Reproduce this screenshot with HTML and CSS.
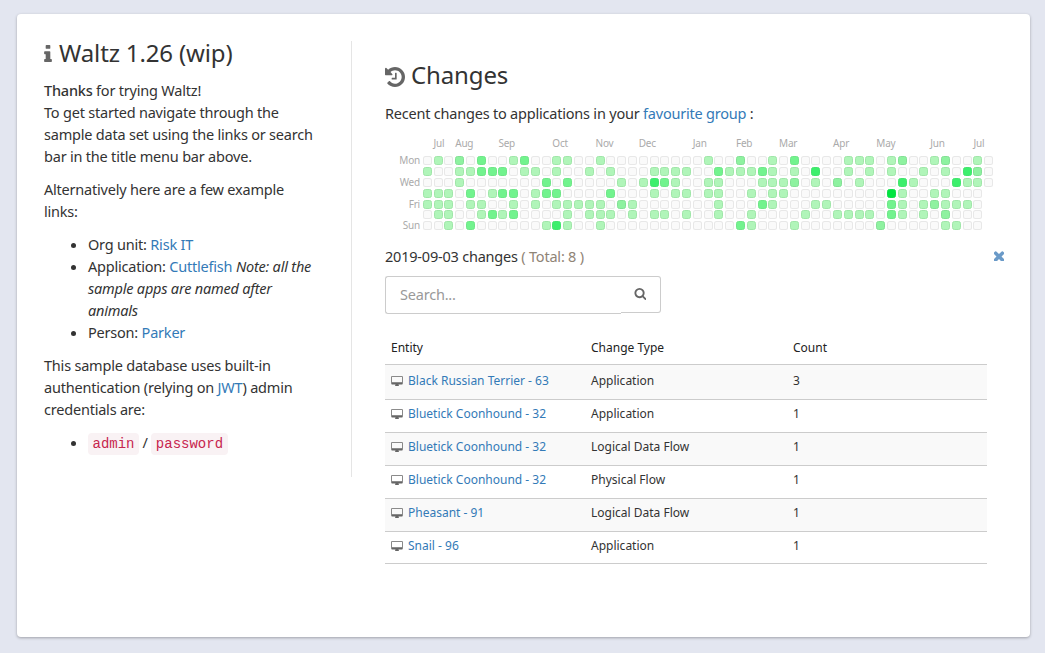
FILE: index.html
```html
<!DOCTYPE html>
<html lang="en">
<head>
    <meta charset="UTF-8">
    <meta name="viewport" content="width=device-width, initial-scale=1.0">
    <title>Waltz</title>
    <link rel="stylesheet" href="styles.css">
</head>
<body>
    <div class="card">
        <div class="intro">
            <h2 class="intro-title">
                <svg class="icon icon-info" viewBox="576 128 640 1408"><path d="M1216 1344v128q0 26-19 45t-45 19h-512q-26 0-45-19t-19-45v-128q0-26 19-45t45-19h64v-384h-64q-26 0-45-19t-19-45v-128q0-26 19-45t45-19h384q26 0 45 19t19 45v576h64q26 0 45 19t19 45zm-128-1152v192q0 26-19 45t-45 19h-256q-26 0-45-19t-19-45v-192q0-26 19-45t45-19h256q26 0 45 19t19 45z"/></svg>
                Waltz 1.26 (wip)
            </h2>
            <p><strong>Thanks</strong> for trying Waltz!<br>
                To get started navigate through the sample data set using the links or search bar in the title menu bar above.</p>
            <p>Alternatively here are a few example links:</p>
            <ul>
                <li>Org unit: <a href="#">Risk IT</a></li>
                <li>Application: <a href="#">Cuttlefish</a> <em>Note: all the sample apps are named after animals</em></li>
                <li>Person: <a href="#">Parker</a></li>
            </ul>
            <p>This sample database uses built-in authentication (relying on <a href="#">JWT</a>) admin credentials are:</p>
            <ul>
                <li><code>admin</code> / <code>password</code></li>
            </ul>
        </div>

        <div class="changes">
            <h2 class="changes-title">
                <svg class="icon icon-history" viewBox="128 128 1536 1536"><path d="M1664 896q0 156-61 298t-164 245-245 164-298 61q-172 0-327-72.5t-264-204.5q-7-10-6.5-22.5t8.5-20.5l137-138q10-9 25-9 16 2 23 12 73 95 179 147t225 52q104 0 198.5-40.5t163.5-109.5 109.5-163.5 40.5-198.5-40.5-198.5-109.5-163.5-163.5-109.5-198.5-40.5q-98 0-188 35.5t-160 101.5l137 138q31 30 14 69-17 40-59 40h-448q-26 0-45-19t-19-45v-448q0-42 40-59 39-17 69 14l130 129q107-101 244.5-156.5t284.5-55.5q156 0 298 61t245 164 164 245 61 298zm-640-288v448q0 14-9 23t-23 9h-320q-14 0-23-9t-9-23v-64q0-14 9-23t23-9h224v-352q0-14 9-23t23-9h64q14 0 23 9t9 23z"/></svg>
                Changes
            </h2>
            <p class="changes-lead">Recent changes to applications in your <a href="#">favourite group</a> :</p>

            <div class="calendar" id="calendar"></div>

            <div class="day-header">
                <span>2019-09-03 changes <span class="total">( Total: 8 )</span></span>
                <svg class="icon icon-close" viewBox="352 352 1088 1088"><path d="M1490 1322q0 40-28 68l-136 136q-28 28-68 28t-68-28l-294-294-294 294q-28 28-68 28t-68-28l-136-136q-28-28-28-68t28-68l294-294-294-294q-28-28-28-68t28-68l136-136q28-28 68-28t68 28l294 294 294-294q28-28 68-28t68 28l136 136q28 28 28 68t-28 68l-294 294 294 294q28 28 28 68z"/></svg>
            </div>

            <div class="search">
                <input class="search-input" type="text" placeholder="Search...">
                <span class="search-addon">
                    <svg class="icon icon-search" viewBox="0 0 1664 1664"><path transform="translate(0 -128)" d="M1216 832q0-185-131.5-316.5t-316.5-131.5-316.5 131.5-131.5 316.5 131.5 316.5 316.5 131.5 316.5-131.5 131.5-316.5zm512 832q0 52-38 90t-90 38q-54 0-90-38l-343-342q-179 124-399 124-143 0-273.5-55.5t-225-150-150-225-55.5-273.5 55.5-273.5 150-225 225-150 273.5-55.5 273.5 55.5 225 150 150 225 55.5 273.5q0 220-124 399l343 343q37 37 37 90z"/></svg>
                </span>
            </div>

            <table class="change-table">
                <thead>
                    <tr><th class="col-entity">Entity</th><th class="col-type">Change Type</th><th>Count</th></tr>
                </thead>
                <tbody>
                    <tr class="tall">
                        <td><svg class="icon icon-desktop" viewBox="-64 0 1920 1664"><use href="#desktop"/></svg><a href="#">Black Russian Terrier - 63</a></td>
                        <td>Application</td><td>3</td>
                    </tr>
                    <tr>
                        <td><svg class="icon icon-desktop" viewBox="-64 0 1920 1664"><use href="#desktop"/></svg><a href="#">Bluetick Coonhound - 32</a></td>
                        <td>Application</td><td>1</td>
                    </tr>
                    <tr>
                        <td><svg class="icon icon-desktop" viewBox="-64 0 1920 1664"><use href="#desktop"/></svg><a href="#">Bluetick Coonhound - 32</a></td>
                        <td>Logical Data Flow</td><td>1</td>
                    </tr>
                    <tr>
                        <td><svg class="icon icon-desktop" viewBox="-64 0 1920 1664"><use href="#desktop"/></svg><a href="#">Bluetick Coonhound - 32</a></td>
                        <td>Physical Flow</td><td>1</td>
                    </tr>
                    <tr>
                        <td><svg class="icon icon-desktop" viewBox="-64 0 1920 1664"><use href="#desktop"/></svg><a href="#">Pheasant - 91</a></td>
                        <td>Logical Data Flow</td><td>1</td>
                    </tr>
                    <tr>
                        <td><svg class="icon icon-desktop" viewBox="-64 0 1920 1664"><use href="#desktop"/></svg><a href="#">Snail - 96</a></td>
                        <td>Application</td><td>1</td>
                    </tr>
                </tbody>
            </table>
        </div>
    </div>

    <svg class="defs" aria-hidden="true">
        <path id="desktop" d="M1728 992v-832q0-13-9.5-22.5t-22.5-9.5h-1600q-13 0-22.5 9.5t-9.5 22.5v832q0 13 9.5 22.5t22.5 9.5h1600q13 0 22.5-9.5t9.5-22.5zm128-832v1088q0 66-47 113t-113 47h-544q0 37 16 77.5t32 71 16 43.5q0 26-19 45t-45 19h-512q-26 0-45-19t-19-45q0-14 16-44t32-70 16-78h-544q-66 0-113-47t-47-113v-1088q0-66 47-113t113-47h1600q66 0 113 47t47 113z"/>
    </svg>

    <script src="calendar.js"></script>
</body>
</html>
```

FILE: styles.css
```css
* {
    box-sizing: border-box;
}

body {
    font-family: "Noto Sans", Arial, sans-serif;
    font-size: 14.5px;
    letter-spacing: -0.21px;
    line-height: 22px;
    color: #333;
    background-color: #e3e6f0;
    margin: 0;
    padding: 14px 15px 16px 17px;
}

a {
    color: #337ab7;
    text-decoration: none;
}

p {
    margin: 0 0 11px;
}

ul {
    margin: 0 0 11px;
    padding-left: 44px;
}

strong {
    font-weight: 500;
}

h2 {
    font-weight: 400;
    font-size: 24px;
    letter-spacing: -0.15px;
    line-height: 30px;
    margin: 0;
}

code {
    font-family: "Liberation Mono", monospace;
    font-size: 14px;
    letter-spacing: 0;
    color: #c7254e;
    background-color: #f9f2f4;
    border-radius: 4px;
    padding: 3px 4.5px;
}

.icon {
    fill: #666;
}

.defs {
    display: none;
}

.card {
    display: flex;
    height: 623px;
    background-color: #fff;
    border-radius: 4px;
    box-shadow: 0 1px 3px rgba(0, 0, 0, 0.3);
}

.intro {
    width: 335px;
    height: 436px;
    margin-top: 27px;
    padding: 0 33px 0 27px;
    border-right: 1px solid #e5e5e5;
}

.intro-title {
    margin: -3px 0 11px;
}

.icon-info {
    width: 8px;
    height: 17px;
    margin-right: 1px;
}

.changes {
    width: 602px;
    margin-left: 33px;
    padding-top: 46px;
}

.changes-title {
    margin-bottom: 12px;
}

.icon-history {
    width: 20px;
    height: 20px;
    vertical-align: -3px;
}

.changes-lead {
    margin-bottom: 15px;
}

.calendar {
    display: grid;
    grid-template-columns: 36px repeat(53, 9px);
    grid-template-rows: 15.7px repeat(7, 9px);
    column-gap: 1.8px;
    row-gap: 1.77px;
    font-size: 10px;
    letter-spacing: -0.2px;
    line-height: 9px;
    color: #aaa;
    margin-bottom: 15px;
}

.cal-month {
    grid-row: 1;
    white-space: nowrap;
}

.cal-day {
    grid-column: 1;
    text-align: right;
    padding-right: 1px;
}

.cal-cell {
    border-radius: 2.5px;
    border: 1px solid rgba(0, 0, 0, 0.07);
    background-color: #fafafa;
}

.cal-cell.l1 { background-color: #b0f5b9; border-color: #a0e6a9; }
.cal-cell.l2 { background-color: #8ef2a0; border-color: #84e096; }
.cal-cell.l3 { background-color: #72f38e; border-color: #70e688; }
.cal-cell.l4 { background-color: #3cef6c; border-color: #44e46e; }
.cal-cell.l5 { background-color: #00e640; border-color: #14dc4c; }

.day-header {
    display: flex;
    justify-content: space-between;
    align-items: center;
    height: 22px;
    width: 619px;
    margin-bottom: 9px;
}

.total {
    color: #8f8476;
}

.icon-close {
    fill: #6a9ac8;
    width: 10px;
    height: 10px;
}

.search {
    display: flex;
    align-items: flex-start;
    width: 276px;
    margin-bottom: 20px;
}

.search-input {
    width: 236px;
    height: 38px;
    padding: 0 14px 3px;
    font: inherit;
    letter-spacing: inherit;
    color: #555;
    border: 1px solid #ccc;
    border-right: none;
    border-radius: 3px 0 0 3px;
    outline: none;
}

.search-input::placeholder {
    color: #999;
}

.search-addon {
    display: flex;
    align-items: center;
    width: 40px;
    height: 37px;
    padding: 0 0 2px 13px;
    border: 1px solid #ccc;
    border-left: none;
    border-radius: 0 3px 3px 0;
}

.icon-search {
    width: 12px;
    height: 12px;
}

.change-table {
    width: 602px;
    table-layout: fixed;
    border-collapse: collapse;
    font-size: 12px;
    letter-spacing: 0;
    line-height: 17px;
}

.col-entity {
    width: 200px;
}

.col-type {
    width: 202px;
}

.change-table th {
    font-weight: 400;
    text-align: left;
    color: #222;
    height: 30px;
    padding: 0 6px 3px;
    border-bottom: 1px solid #ccc;
}

.change-table td {
    height: 33px;
    padding: 0 6px 5px;
    border-bottom: 1px solid #ccc;
}

.change-table .tall td {
    height: 35px;
    padding-bottom: 3px;
}

.change-table tr:last-child td {
    height: 32px;
    padding-bottom: 3px;
}

.change-table tbody tr:nth-child(odd) {
    background-color: #f9f9f9;
}

.icon-desktop {
    width: 12px;
    height: 10px;
    margin-right: 5px;
    vertical-align: -1px;
}
```

FILE: calendar.js
```js
// one entry per weekday, Mon to Sun: { week: level }, other weeks are empty
var activity = [
    {1:1, 3:2, 5:3, 8:1, 9:3, 12:1, 13:1, 16:1, 26:1, 29:2, 32:1, 34:3, 39:1, 40:1, 41:1, 43:1, 44:2, 47:1, 48:2, 51:1},
    {0:1, 3:1, 4:1, 5:3, 6:3, 7:3, 9:1, 10:1, 12:1, 15:1, 17:1, 21:1, 22:1, 23:1, 24:1, 27:3, 28:1, 29:1, 30:1, 31:3, 32:1, 34:1, 36:4, 39:1, 41:1, 43:1, 46:1, 48:1, 50:4, 51:2},
    {3:1, 11:3, 13:3, 18:1, 20:1, 21:4, 22:3, 23:1, 26:1, 27:1, 31:1, 32:1, 33:1, 34:2, 36:1, 38:2, 40:1, 44:4, 45:1, 49:4, 50:1, 51:1},
    {0:1, 1:1, 2:1, 4:3, 6:1, 7:3, 8:3, 10:1, 11:3, 12:3, 17:3, 21:1, 23:1, 24:1, 26:1, 27:1, 30:1, 32:1, 33:1, 43:5, 44:1, 47:1, 48:1},
    {0:1, 1:1, 2:1, 4:1, 5:1, 8:1, 10:1, 12:1, 13:1, 14:1, 15:1, 16:1, 18:2, 19:1, 27:1, 31:3, 32:1, 36:1, 37:1, 43:3, 44:1, 46:1, 47:2, 48:1, 49:1, 50:1},
    {1:1, 2:1, 5:1, 6:3, 7:1, 8:3, 13:1, 15:1, 16:1, 17:1, 19:1, 21:1, 22:1, 24:1, 27:1, 30:1, 35:1, 38:1, 39:1, 40:1, 41:1, 43:3, 44:1, 46:1, 48:2},
    {2:1, 4:3, 11:1, 12:4, 13:1, 16:1, 29:3, 30:1, 34:1, 42:2, 48:1, 49:1}
];

var months = [["Jul", 1], ["Aug", 3], ["Sep", 7], ["Oct", 12], ["Nov", 16], ["Dec", 20], ["Jan", 25],
    ["Feb", 29], ["Mar", 33], ["Apr", 38], ["May", 42], ["Jun", 47], ["Jul", 51]];
var days = { 0: "Mon", 2: "Wed", 4: "Fri", 6: "Sun" };

var calendar = document.getElementById("calendar");

months.forEach(function(m) {
    var label = document.createElement("div");
    label.className = "cal-month";
    label.textContent = m[0];
    label.style.gridColumnStart = m[1] + 2;
    calendar.appendChild(label);
});

Object.keys(days).forEach(function(r) {
    var label = document.createElement("div");
    label.className = "cal-day";
    label.textContent = days[r];
    label.style.gridRowStart = +r + 2;
    calendar.appendChild(label);
});

activity.forEach(function(row, r) {
    var weeks = r < 3 ? 53 : 52;
    for (var w = 0; w < weeks; w++) {
        var cell = document.createElement("div");
        cell.className = "cal-cell" + (row[w] ? " l" + row[w] : "");
        cell.style.gridColumnStart = w + 2;
        cell.style.gridRowStart = r + 2;
        calendar.appendChild(cell);
    }
});
```
